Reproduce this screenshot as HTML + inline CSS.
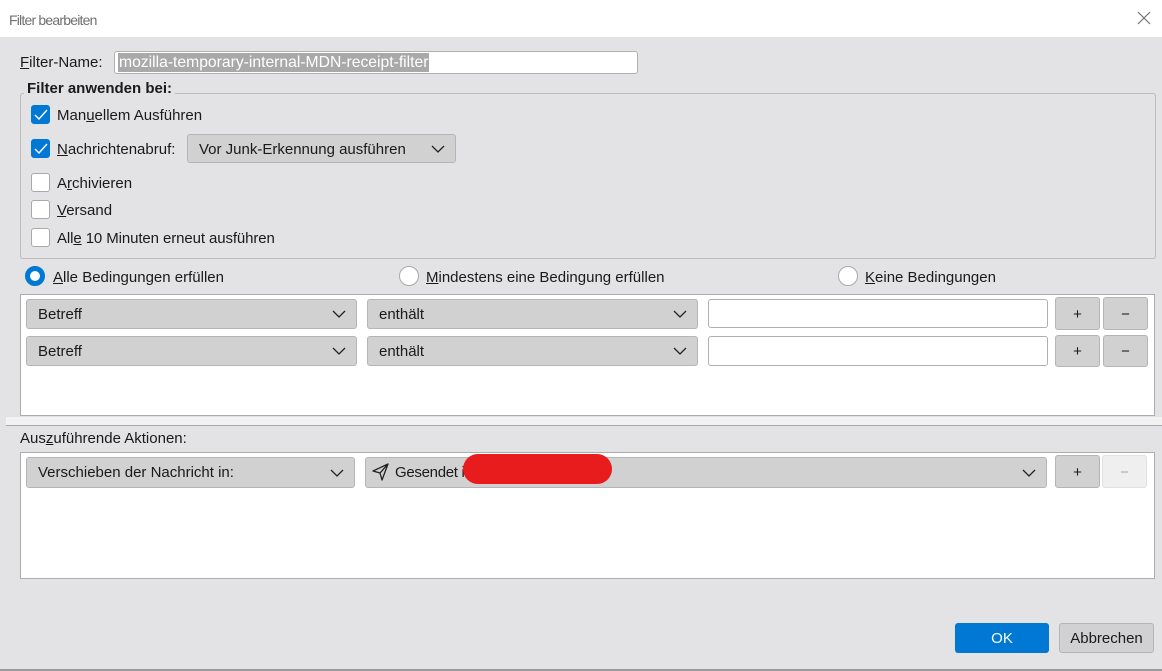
<!DOCTYPE html>
<html><head><meta charset="utf-8"><style>
*{box-sizing:border-box;margin:0;padding:0}
body{width:1162px;height:671px;overflow:hidden;background:#e3e3e5;font-family:"Liberation Sans",sans-serif;font-size:15px;color:#1a1a1a;position:relative}
.a{position:absolute}
.t{position:absolute;white-space:nowrap;line-height:18px;letter-spacing:0;margin-top:1px}
.cb{position:absolute;width:19px;height:19px;border:1px solid #a9a9a9;border-radius:3px;background:#fff}
.cb.on{background:#0078d4;border-color:#0078d4}
.sel{position:absolute;background:#d1d1d1;border:1px solid #b5b5b5;border-radius:3px}
.sel span{position:absolute;left:11px;top:6px;white-space:nowrap}
.sel svg{position:absolute;right:10px;top:10px}
.btn{position:absolute;background:#d1d1d1;border:1px solid #b5b5b5;border-radius:3px;text-align:center;line-height:27px;font-size:15px}
.inp{position:absolute;background:#fff;border:1px solid #b0b0b0;border-radius:3px}
.rad{position:absolute;width:20px;height:20px;border:1px solid #a9a9a9;border-radius:50%;background:#fff}
u{text-decoration:underline}
</style></head><body>
<div class="a" style="left:0;top:0;width:1162px;height:37px;background:#fff"></div>
<div class="t" style="left:9px;top:10px;color:#707070;font-size:14px;letter-spacing:-0.8px">Filter bearbeiten</div>
<svg class="a" style="left:1137px;top:11px" width="14" height="14"><path d="M1 1L13 13M13 1L1 13" stroke="#777" stroke-width="1.2"/></svg>

<div class="t" style="left:20px;top:53px"><u>F</u>ilter-Name:</div>
<div class="inp" style="left:114px;top:51px;width:524px;height:23px"></div>
<div class="a" style="left:118px;top:53px;width:311px;height:19px;background:#a9a9a9"></div>
<div class="t" style="left:119px;top:53px;color:#fff;font-size:15.7px;letter-spacing:0">mozilla-temporary-internal-MDN-receipt-filter</div>

<div class="a" style="left:20px;top:93px;width:1136px;height:166px;border:1px solid #bcbcbc;border-radius:3px"></div>
<div class="t" style="left:24px;top:79px;background:#e3e3e5;padding:0 3px;font-weight:bold">Filter anwenden bei:</div>

<div class="cb on" style="left:31px;top:105px"></div>
<svg class="a" style="left:31px;top:105px" width="19" height="19"><path d="M4 10l4 4 8-9" stroke="#fff" stroke-width="1.4" fill="none"/></svg>
<div class="t" style="left:57px;top:106px">Man<u>u</u>ellem Ausführen</div>
<div class="cb on" style="left:31px;top:139px"></div>
<svg class="a" style="left:31px;top:139px" width="19" height="19"><path d="M4 10l4 4 8-9" stroke="#fff" stroke-width="1.4" fill="none"/></svg>
<div class="t" style="left:57px;top:140px"><u>N</u>achrichtenabruf:</div>
<div class="sel" style="left:187px;top:134px;width:269px;height:29px"><span>Vor Junk-Erkennung ausführen</span><svg width="14" height="8"><path d="M1 1l6 6 6-6" stroke="#222" stroke-width="1.3" fill="none"/></svg></div>
<div class="cb" style="left:31px;top:173px"></div>
<div class="t" style="left:57px;top:174px">A<u>r</u>chivieren</div>
<div class="cb" style="left:31px;top:200px"></div>
<div class="t" style="left:57px;top:201px"><u>V</u>ersand</div>
<div class="cb" style="left:31px;top:228px"></div>
<div class="t" style="left:57px;top:229px;letter-spacing:-0.1px">All<u>e</u> 10 Minuten erneut ausführen</div>

<div class="rad" style="left:25px;top:266px;border:5px solid #0078d4"></div>
<div class="t" style="left:53px;top:268px"><u>A</u>lle Bedingungen erfüllen</div>
<div class="rad" style="left:399px;top:266px"></div>
<div class="t" style="left:426px;top:268px"><u>M</u>indestens eine Bedingung erfüllen</div>
<div class="rad" style="left:838px;top:266px"></div>
<div class="t" style="left:865px;top:268px"><u>K</u>eine Bedingungen</div>

<div class="a" style="left:20px;top:294px;width:1135px;height:122px;background:#fff;border:1px solid #acacac"></div>
<div class="sel" style="left:26px;top:299px;width:331px;height:30px"><span>Betreff</span><svg width="14" height="8"><path d="M1 1l6 6 6-6" stroke="#222" stroke-width="1.3" fill="none"/></svg></div>
<div class="sel" style="left:367px;top:299px;width:331px;height:30px"><span>enthält</span><svg width="14" height="8"><path d="M1 1l6 6 6-6" stroke="#222" stroke-width="1.3" fill="none"/></svg></div>
<div class="inp" style="left:708px;top:299px;width:340px;height:29px"></div>
<div class="btn" style="left:1055px;top:297px;width:45px;height:33px;line-height:33px">+</div>
<div class="btn" style="left:1103px;top:297px;width:45px;height:33px;line-height:33px">−</div>
<div class="sel" style="left:26px;top:336px;width:331px;height:30px"><span>Betreff</span><svg width="14" height="8"><path d="M1 1l6 6 6-6" stroke="#222" stroke-width="1.3" fill="none"/></svg></div>
<div class="sel" style="left:367px;top:336px;width:331px;height:30px"><span>enthält</span><svg width="14" height="8"><path d="M1 1l6 6 6-6" stroke="#222" stroke-width="1.3" fill="none"/></svg></div>
<div class="inp" style="left:708px;top:336px;width:340px;height:30px"></div>
<div class="btn" style="left:1055px;top:335px;width:45px;height:32px;line-height:32px">+</div>
<div class="btn" style="left:1103px;top:335px;width:45px;height:32px;line-height:32px">−</div>

<div class="a" style="left:6px;top:417px;width:1156px;height:8px;background:#f2f2f2"></div>
<div class="a" style="left:6px;top:425px;width:1156px;height:1px;background:#a8a8a8"></div>

<div class="t" style="left:20px;top:429px">Aus<u>z</u>uführende Aktionen:</div>
<div class="a" style="left:20px;top:452px;width:1135px;height:127px;background:#fff;border:1px solid #acacac"></div>
<div class="sel" style="left:26px;top:457px;width:329px;height:31px"><span style="top:6px">Verschieben der Nachricht in:</span><svg width="14" height="8" style="top:11px"><path d="M1 1l6 6 6-6" stroke="#222" stroke-width="1.3" fill="none"/></svg></div>
<div class="sel" style="left:365px;top:457px;width:682px;height:31px"><span style="left:29px;top:6px;letter-spacing:-0.3px">Gesendet i</span><svg width="14" height="8" style="top:11px"><path d="M1 1l6 6 6-6" stroke="#222" stroke-width="1.3" fill="none"/></svg></div>
<svg class="a" style="left:372px;top:463px" width="18" height="18"><path d="M16 1L1 8l7 2 2 7z M16 1L8 10" stroke="#222" stroke-width="1.3" fill="none" stroke-linejoin="round"/></svg>
<div class="a" style="left:463px;top:454px;width:149px;height:30px;background:#e81c1c;border-radius:15px"></div>
<div class="btn" style="left:1055px;top:455px;width:45px;height:33px;line-height:33px">+</div>
<div class="btn" style="left:1102px;top:455px;width:45px;height:33px;line-height:33px;background:#efefef;border-color:#e0e0e0;color:#aaa">−</div>

<div class="a" style="left:955px;top:623px;width:94px;height:30px;background:#0078d4;border-radius:3px;color:#fff;text-align:center;line-height:31px">OK</div>
<div class="btn" style="left:1059px;top:623px;width:95px;height:30px;line-height:29px;font-size:15px;background:#d1d1d4">Abbrechen</div>
<div class="a" style="left:0;top:669px;width:1162px;height:2px;background:#9a9a9a"></div>
</body></html>
